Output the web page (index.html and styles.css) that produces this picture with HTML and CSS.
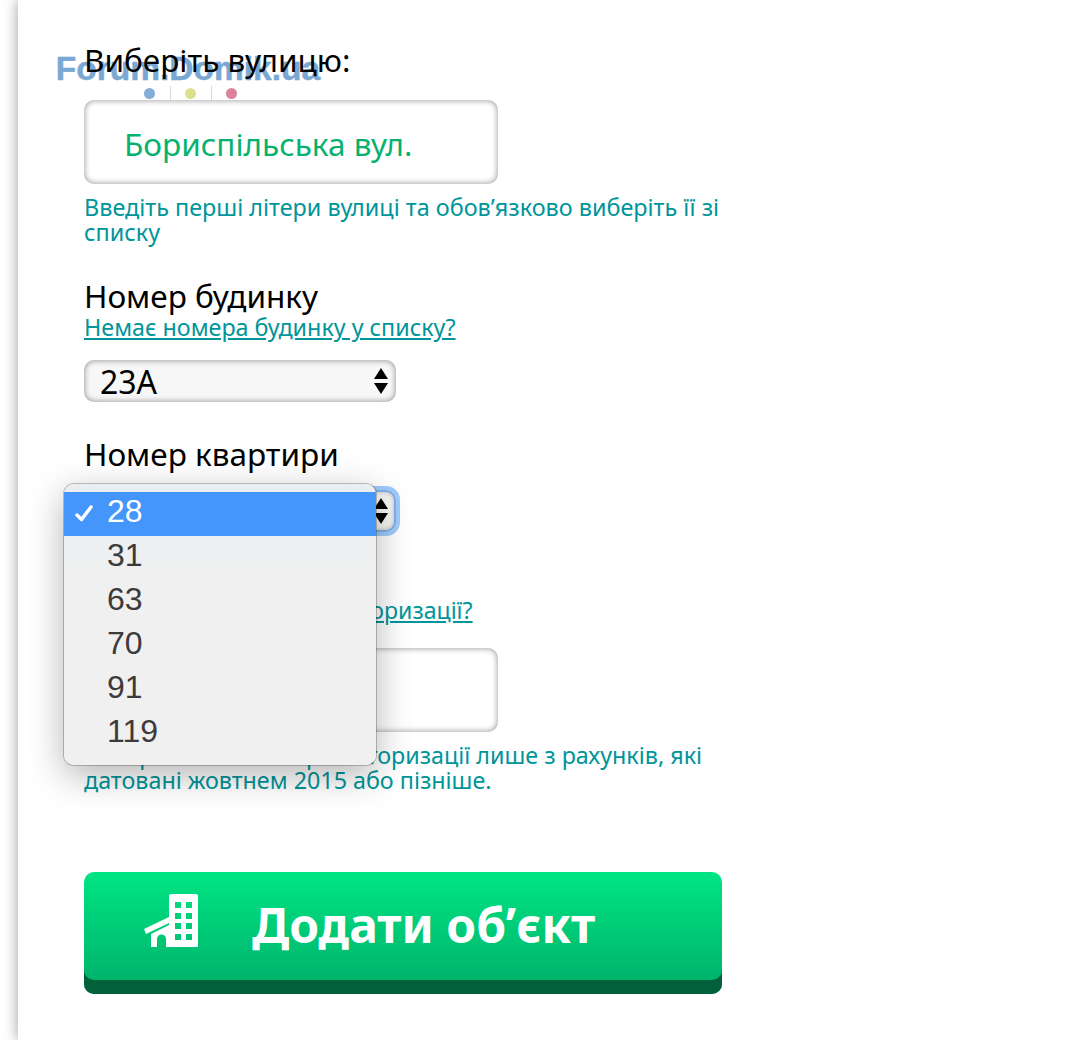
FILE: index.html
```html
<!DOCTYPE html>
<html>
<head>
  <title>Додати об'єкт</title>
  <link rel="stylesheet" href="styles.css">
</head>
<body>
  <div class="page">
    <!-- Watermark under the first label -->
    <div class="watermark">
      <div class="watermark-name">Forum.Domik.ua</div>
      <div class="watermark-dots">
        <span class="dot dot-blue"></span>
        <span class="dot-line"></span>
        <span class="dot dot-yellow"></span>
        <span class="dot-line"></span>
        <span class="dot dot-pink"></span>
      </div>
    </div>

    <form class="form">
      <div class="field field-street">
        <div class="label">Виберіть вулицю:</div>
        <div class="text-box street-box">Бориспільська вул.</div>
        <div class="hint">Введіть перші літери вулиці та обов’язково виберіть її зі списку</div>
      </div>

      <div class="field field-house">
        <div class="label">Номер будинку</div>
        <a class="link" href="#">Немає номера будинку у списку?</a>
        <div class="select-box">
          <span>23А</span>
          <span class="arrows"><i class="arrow-up"></i><i class="arrow-down"></i></span>
        </div>
      </div>

      <div class="field field-flat">
        <div class="label">Номер квартири</div>
        <div class="select-box select-focus">
          <span>28</span>
          <span class="arrows"><i class="arrow-up"></i><i class="arrow-down"></i></span>
        </div>
      </div>

      <div class="field field-code">
        <a class="link" href="#">Як подивитися номер авторизації?</a>
        <div class="text-box"></div>
        <div class="hint">Використайте номери авторизації лише з рахунків, які датовані жовтнем 2015 або пізніше.</div>
      </div>

      <button class="submit" type="button">
        <svg class="submit-icon" width="54" height="53" viewBox="0 0 54 53">
          <path fill="#fff" fill-rule="evenodd" d="M25 2a2 2 0 0 1 2-2h25a2 2 0 0 1 2 2v51H25zM31 8v6h6V8zM42 8v6h6V8zM31 19v6h6v-6zM42 19v6h6v-6zM31 29v6h6v-6zM42 29v6h6v-6zM31 40v6h6v-6zM42 40v6h6v-6z"/>
          <path fill="#fff" d="M0 35 25 23v6L2 40zM7 40 25 31v22H22V45a4.500 4.500 0 0 0-9 0v8H7z"/>
        </svg>
        <span>Додати об’єкт</span>
      </button>
    </form>

    <!-- Open native select list -->
    <ul class="popup">
      <li class="popup-item popup-selected">
        <svg class="check" width="20" height="18" viewBox="0 0 20 18">
          <path d="M3 11 7.500 15.500 17 3" fill="none" stroke="#fff" stroke-width="3.500" stroke-linecap="round" stroke-linejoin="round"/>
        </svg>
        28
      </li>
      <li class="popup-item">31</li>
      <li class="popup-item">63</li>
      <li class="popup-item">70</li>
      <li class="popup-item">91</li>
      <li class="popup-item">119</li>
    </ul>
  </div>
</body>
</html>
```

FILE: styles.css
```css
html, body {
  margin: 0;
  height: 100%;
  overflow: hidden;
  background-color: #ffffff;
}

body {
  font-family: "Noto Sans", "Open Sans", sans-serif;
  color: #000000;
}

.page {
  position: relative;
  height: 1040px;
  margin-left: 18px;
  padding: 42px 0 0 66px;
  box-sizing: border-box;
  box-shadow: -2px 0 12px rgba(0, 0, 0, 0.3);
  background-color: #ffffff;
}

.form {
  position: relative;
  z-index: 1;
  width: 638px;
}

.label {
  font-size: 31.500px;
  line-height: 36px;
}

.hint, .link {
  line-height: 25px;
  color: #00959a;
}

.hint {
  margin-top: 11px;
  font-size: 23.300px;
}

.field-street .hint {
  font-size: 23.400px;
}

.link {
  display: block;
  width: max-content;
  font-size: 23.300px;
}

.field-house .link {
  margin-top: 1px;
}

.field-code .link {
  font-size: 23.100px;
}

.text-box {
  width: 414px;
  height: 84px;
  box-sizing: border-box;
  margin-top: 22px;
  padding-left: 40px;
  border-radius: 10px;
  background-color: #ffffff;
  box-shadow: inset 0 0 6px rgba(0, 0, 0, 0.45);
  line-height: 88px;
  font-size: 31.500px;
}

.street-box {
  color: #08b26e;
}

.field-house {
  margin-top: 33px;
}

.field-flat {
  margin-top: 34px;
}

.field-code {
  padding-top: 66px;
}

.field-code .text-box {
  margin-top: 25px;
}

.select-box {
  display: flex;
  justify-content: space-between;
  align-items: center;
  width: 312px;
  height: 42px;
  box-sizing: border-box;
  margin-top: 20px;
  padding: 0 8px 0 16px;
  border-radius: 10px;
  background-color: #f7f7f7;
  box-shadow: inset 0 0 6px rgba(0, 0, 0, 0.45);
  font-size: 32px;
}

.field-flat .select-box {
  margin-top: 18px;
}

.select-focus {
  outline: 4px solid #a0cbfc;
  box-shadow: inset 0 0 0 2px #7db0ec, inset 0 0 6px rgba(0, 0, 0, 0.45);
}

.arrows {
  display: flex;
  flex-direction: column;
  gap: 4px;
}

.arrow-up, .arrow-down {
  display: block;
  width: 0;
  height: 0;
  border-left: 7px solid transparent;
  border-right: 7px solid transparent;
}

.arrow-up {
  border-bottom: 11px solid #000000;
}

.arrow-down {
  border-top: 11px solid #000000;
}

.submit {
  display: flex;
  align-items: center;
  width: 638px;
  height: 122px;
  box-sizing: border-box;
  margin-top: 79px;
  padding: 0 0 18px 60px;
  border: none;
  border-radius: 10px;
  background: linear-gradient(#00e584, #00ae69);
  box-shadow: inset 0 -14px 0 #02603a;
  font-family: inherit;
  font-size: 48px;
  font-weight: 700;
  color: #ffffff;
}

.submit-icon {
  margin-bottom: 8px;
}

.submit span {
  margin-left: 54px;
}

/* Open dropdown */
.popup {
  position: absolute;
  z-index: 2;
  left: 46px;
  top: 484px;
  width: 312px;
  height: 281px;
  box-sizing: border-box;
  margin: 0;
  padding: 8px 0 0;
  list-style: none;
  border-radius: 10px;
  background: linear-gradient(#ebeef0, #f0f0f0 40%);
  box-shadow: 0 0 0 1px rgba(0, 0, 0, 0.22), 0 10px 36px rgba(0, 0, 0, 0.3);
  font-family: "Liberation Sans", sans-serif;
  font-size: 32px;
  color: #3c3a3a;
}

.popup-item {
  position: relative;
  height: 44px;
  padding-left: 43px;
  line-height: 38px;
}

.popup-selected {
  background-color: #4596fb;
  color: #ffffff;
}

.check {
  position: absolute;
  left: 10px;
  top: 12px;
}

/* Watermark */
.watermark {
  position: absolute;
  left: 37px;
  top: 50px;
  width: 266px;
  color: #7aa8d4;
}

.watermark-name {
  font-family: "Liberation Sans", sans-serif;
  font-size: 33.500px;
  font-weight: 700;
  line-height: 38px;
  text-align: center;
  -webkit-text-stroke: 0.5px #7aa8d4;
}

.watermark-dots {
  display: flex;
  justify-content: center;
  align-items: center;
  gap: 14.500px;
  height: 14px;
  margin: -2px 0 0 5px;
}

.dot {
  width: 11px;
  height: 11px;
  border-radius: 50%;
}

.dot-blue { background-color: #85add9; }
.dot-yellow { background-color: #dbe08e; }
.dot-pink { background-color: #dd829b; }

.dot-line {
  width: 1px;
  height: 14px;
  background-color: #d9d9d9;
}
```
